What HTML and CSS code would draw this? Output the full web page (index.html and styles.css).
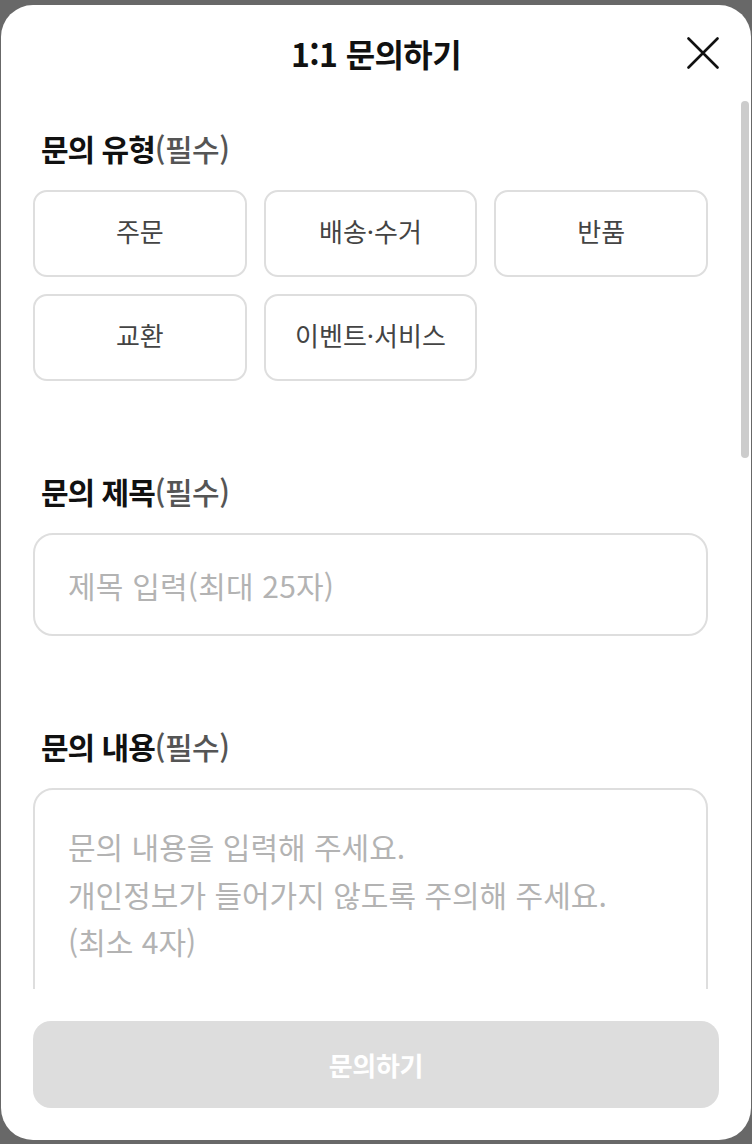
FILE: index.html
```html
<!DOCTYPE html>
<html lang="ko">
<head>
  <meta charset="UTF-8">
  <meta name="viewport" content="width=device-width, initial-scale=1.0"/>
  <title>1:1 문의하기</title>
  <link rel="stylesheet" href="styles.css">
</head>
<body>

<div class="modal">
  <header class="modal-head">
    <h1>1:1 문의하기</h1>
    <button class="close-btn" aria-label="닫기">
      <svg width="32" height="32" viewBox="0 0 32 32"><path d="M1.5 1.5 L30.5 30.5 M30.5 1.5 L1.5 30.5" stroke="#111" stroke-width="2.6" stroke-linecap="round" fill="none"/></svg>
    </button>
  </header>

  <div class="modal-body">
    <!-- 문의 유형 -->
    <section class="field">
      <h2 class="label">문의 유형<span>(필수)</span></h2>
      <div class="type-grid">
        <button class="type-btn">주문</button>
        <button class="type-btn">배송·수거</button>
        <button class="type-btn">반품</button>
        <button class="type-btn">교환</button>
        <button class="type-btn">이벤트·서비스</button>
      </div>
    </section>

    <!-- 문의 제목 -->
    <section class="field">
      <h2 class="label">문의 제목<span>(필수)</span></h2>
      <input class="text-input" type="text" placeholder="제목 입력(최대 25자)">
    </section>

    <!-- 문의 내용 -->
    <section class="field">
      <h2 class="label">문의 내용<span>(필수)</span></h2>
      <textarea class="text-area" placeholder="문의 내용을 입력해 주세요.&#10;개인정보가 들어가지 않도록 주의해 주세요.&#10;(최소 4자)"></textarea>
    </section>
  </div>
  <!-- scroll thumb drawn over the body -->
  <div class="scroll-thumb"></div>

  <footer class="modal-foot">
    <button class="submit-btn" disabled>문의하기</button>
  </footer>
</div>

</body>
</html>
```

FILE: styles.css
```css
html, body { margin:0; padding:0; }
body { background:#686868; font-family:"Noto Sans CJK KR", "Noto Sans", sans-serif; height:1144px; overflow:hidden; }
button, input, textarea { font-family:inherit; }

.modal { margin:5px 1px 0 1px; height:1135px; background:#fff; border-radius:32px; display:flex; flex-direction:column; overflow:hidden; position:relative; }

/* header */
.modal-head { height:95px; flex:none; text-align:center; box-sizing:border-box; padding-top:27px; }
.modal-head h1 { margin:0; font-size:32px; line-height:42px; font-weight:700; color:#111; letter-spacing:-0.6px; }
.close-btn { position:absolute; top:32px; right:32px; width:32px; height:32px; padding:0; border:none; background:none; cursor:pointer; }
.close-btn svg { display:block; }

/* scroll body */
.modal-body { flex:1; overflow-y:auto; scrollbar-width:none; padding:30px 43px 40px 32px; }
.modal-body::-webkit-scrollbar { display:none; }
.scroll-thumb { position:absolute; top:96px; right:2px; width:8px; height:357px; border-radius:4px; background:#cccccc; }

.field + .field { margin-top:92px; }
.label { margin:0 0 24px 8px; font-size:30px; line-height:36px; font-weight:700; color:#111; letter-spacing:-1px; }
.label span { font-weight:500; color:#555; letter-spacing:-0.5px; }

.type-grid { display:grid; grid-template-columns:repeat(3, 1fr); gap:17px; }
.type-btn { height:87px; background:#fff; border:2px solid #dedede; border-radius:14px; font-size:26px; color:#444; cursor:pointer; padding:0 0 6px; }

.text-input { display:block; width:100%; height:103px; box-sizing:border-box; border:2px solid #dedede; border-radius:20px; padding:0 33px; font-size:30px; letter-spacing:0.2px; color:#222; outline:none; }
.text-input::placeholder, .text-area::placeholder { color:#b3b3b3; }

.text-area { display:block; width:100%; height:420px; box-sizing:border-box; border:2px solid #dedede; border-radius:20px; padding:33px 33px; font-size:30px; line-height:47.5px; color:#222; resize:none; outline:none; }

/* footer */
.modal-foot { flex:none; padding:32px 32px 32px; }
.submit-btn { display:block; width:100%; height:87px; border:none; border-radius:18px; background:#dddddd; color:#fff; font-size:26px; font-weight:700; letter-spacing:-0.3px; }
```
